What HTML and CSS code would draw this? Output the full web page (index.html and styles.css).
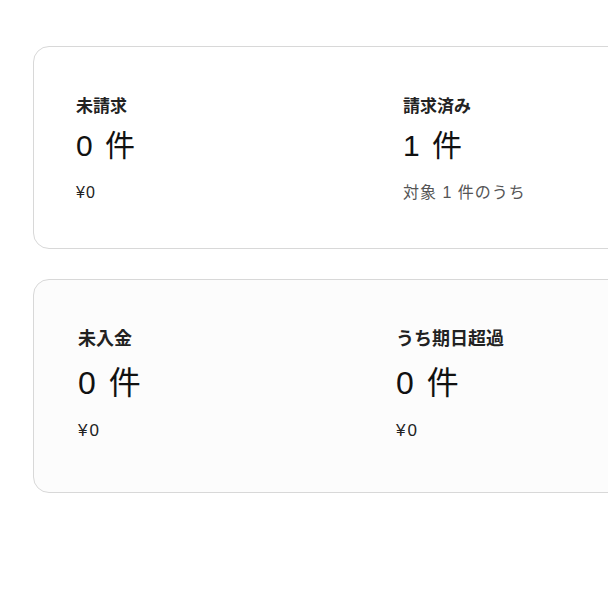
FILE: index.html
```html
<!DOCTYPE html>
<html lang="ja">
<head>
<meta charset="utf-8">
<link rel="stylesheet" href="styles.css">
</head>
<body>
<div class="page">
  <section class="card card-billing">
    <div class="stat">
      <div class="label">未請求</div>
      <div class="count">0 件</div>
      <div class="sub">¥0</div>
    </div>
    <div class="stat">
      <div class="label">請求済み</div>
      <div class="count">1 件</div>
      <div class="sub muted">対象 1 件のうち</div>
    </div>
  </section>
  <section class="card card-payment">
    <div class="stat">
      <div class="label">未入金</div>
      <div class="count">0 件</div>
      <div class="sub">¥0</div>
    </div>
    <div class="stat">
      <div class="label">うち期日超過</div>
      <div class="count">0 件</div>
      <div class="sub">¥0</div>
    </div>
  </section>
</div>
</body>
</html>
```
FILE: styles.css
```css
html, body {
  margin: 0;
  padding: 0;
  background: #ffffff;
}
body {
  font-family: "Liberation Sans", "Noto Sans CJK JP", sans-serif;
  color: #1a1a1a;
}
.page {
  display: flex;
  flex-direction: column;
  gap: 30px;
  padding: 46px 0 0 33px;
  width: 700px;
}
.card {
  box-sizing: border-box;
  width: 680px;
  border: 1px solid #d8d8d8;
  border-radius: 16px;
  background: #ffffff;
  display: grid;
}
.card-billing {
  grid-template-columns: 327px 327px;
  padding: 48px 0 0 42px;
  height: 203px;
}
.card-payment {
  grid-template-columns: 318px 318px;
  padding: 46px 0 0 44px;
  height: 214px;
  background: #fcfcfc;
}
.stat {
  display: flex;
  flex-direction: column;
}
.label {
  font-family: "Noto Sans CJK JP", sans-serif;
  font-weight: 700;
  font-size: 17px;
  line-height: 20px;
  color: #222;
}
.count {
  font-size: 30px;
  line-height: 36px;
  margin-top: 13px;
  color: #111;
  word-spacing: 4px;
}
.sub {
  font-size: 16px;
  line-height: 20px;
  margin-top: 19px;
  color: #222;
  letter-spacing: 1px;
}
.sub.muted {
  color: #555;
}
.card-payment .label {
  font-size: 18px;
  line-height: 22px;
}
.card-payment .count {
  font-size: 32px;
  line-height: 38px;
  margin-top: 16px;
}
.card-payment .sub {
  font-size: 17px;
  margin-top: 19px;
  letter-spacing: 2px;
}
```
